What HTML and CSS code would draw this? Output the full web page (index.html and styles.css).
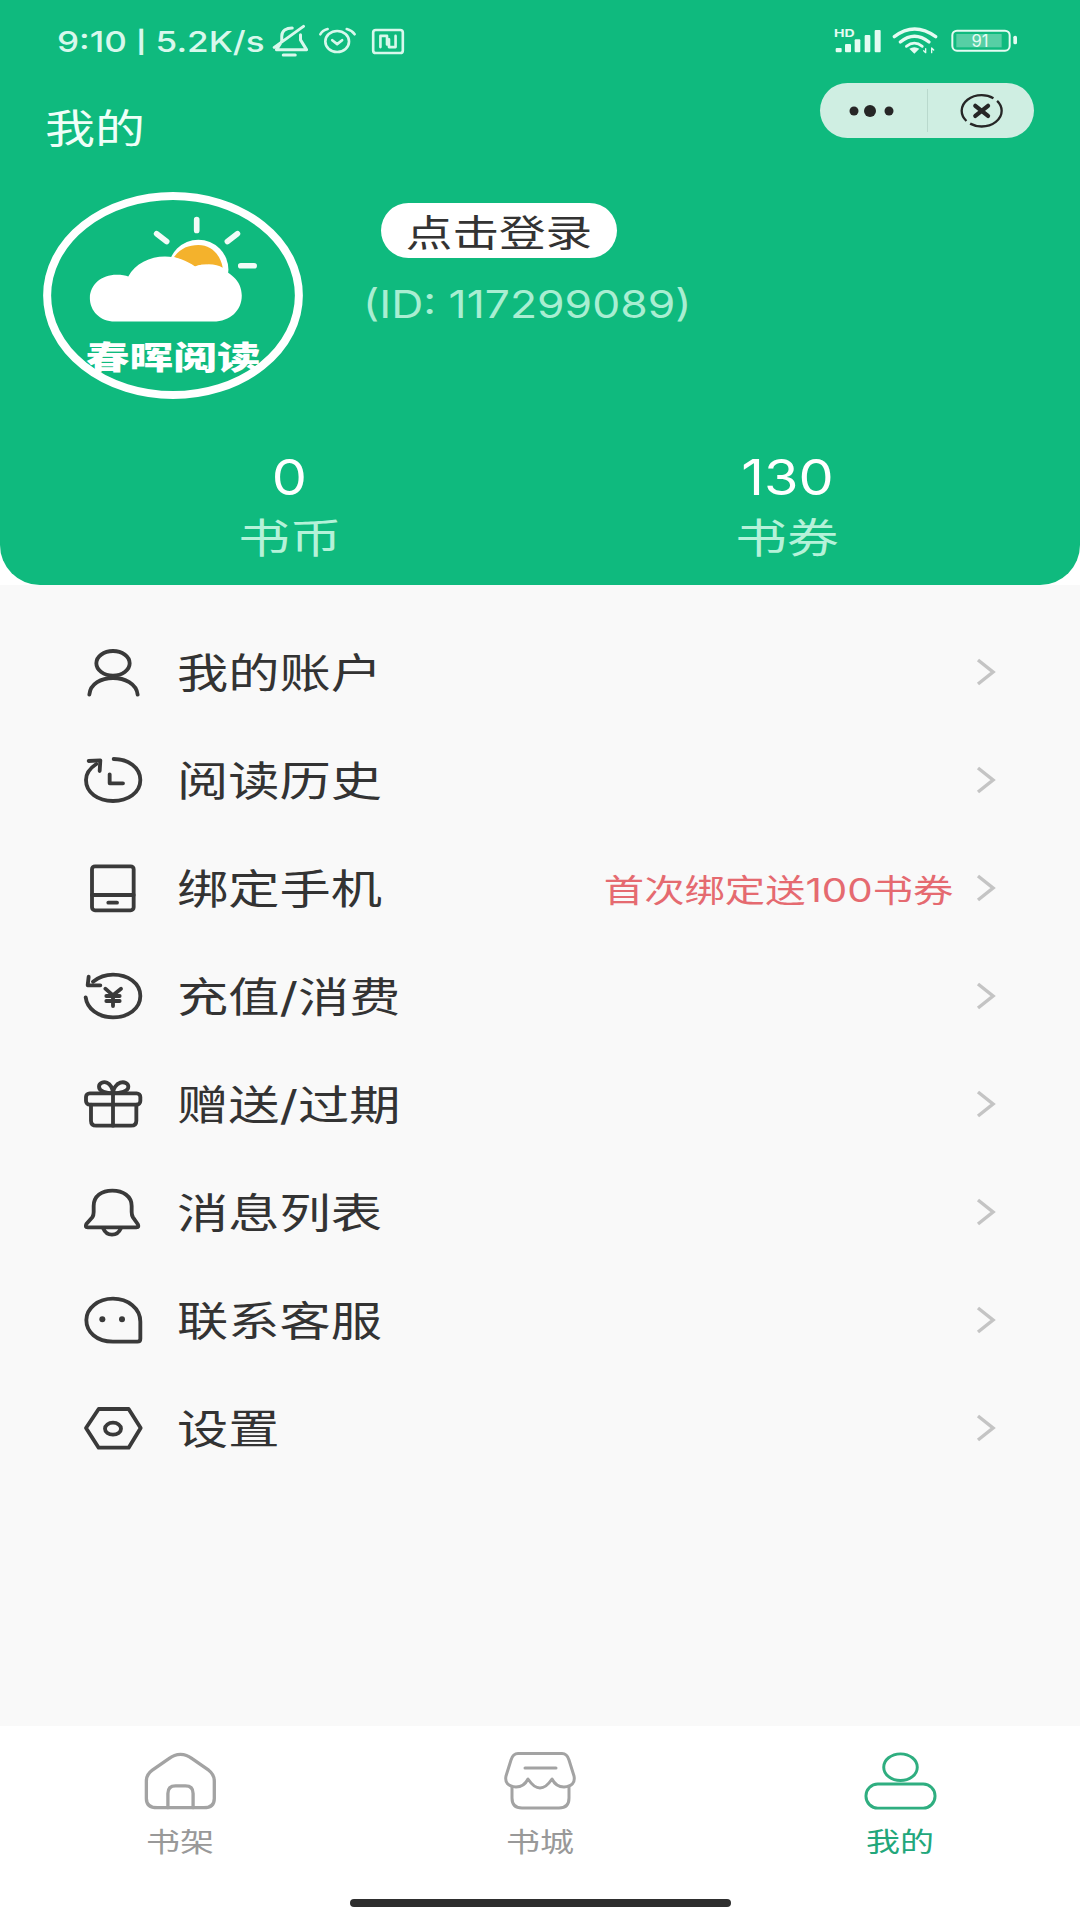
FILE: index.html
```html
<!DOCTYPE html>
<html>
<head>
	<meta charset="utf-8">
	<title>我的</title>
	<link rel="stylesheet" href="styles.css">
</head>
<body>
<div class="page">
	<!--顶部-->
	<div class="head">
		<div class="status">
			<div class="status-left">
				<span class="clock">9:10 <span class="sep">|</span> 5.2K/s</span>
				<svg class="st-bell" viewBox="30 18 96 90"><path d="M42 86 L56 64 V50 C56 36 68 28 84 28 M106 46 V60 L122 86 H42 M36 80 L114 24 M60 100 H92"/></svg>
				<svg class="st-alarm" viewBox="165 18 118 88"><ellipse cx="223" cy="62" rx="36" ry="32"/><path d="M172 40 Q178 28 194 24 M252 24 Q268 28 276 40 M208 58 L223 70 L238 58"/></svg>
				<svg class="st-nfc" viewBox="322 22 102 82"><rect x="328" y="28" width="90" height="70" rx="8"/><path d="M350 80 V46 H370 V72 M396 46 V80 H376 V56"/></svg>
			</div>
			<svg class="status-right" viewBox="0 0 600 126">
				<text class="st-hd" x="27" y="52" textLength="62" lengthAdjust="spacingAndGlyphs">HD</text>
				<g class="st-fill">
					<rect x="32" y="84" width="18" height="13" rx="3"/>
					<rect x="60" y="72" width="18" height="25" rx="3"/>
					<rect x="89" y="58" width="17" height="39" rx="3"/>
					<rect x="119" y="45" width="17" height="52" rx="3"/>
					<rect x="149" y="30" width="18" height="67" rx="3"/>
					<path d="M253 86 Q268 77 283 86 L268 101Z"/>
					<rect x="565" y="47" width="11" height="26" rx="5"/>
				</g>
				<g class="st-line">
					<path d="M208 50 Q268 4 332 50"/>
					<path d="M226 66 Q268 32 312 66"/>
					<path d="M244 79 Q268 60 292 79" stroke-width="8"/>
					<path d="M302 86 V98 M296 92 L302 98 M320 98 V84 M326 90 L320 84" stroke-width="4"/>
					<rect x="382" y="32" width="172" height="60" rx="14" stroke-width="6"/>
				</g>
				<rect class="st-level" x="394" y="42" width="136" height="40"/>
				<text class="st-num" x="465" y="81">91</text>
			</svg>
		</div>
		<div class="title-row">
			<div class="title"><span class="wide">我的</span></div>
			<div class="capsule">
				<div class="cap-cell">
					<svg class="cap-dots" viewBox="0 0 50 14"><circle cx="5" cy="7" r="4.5"/><circle cx="21" cy="7" r="6"/><circle cx="40" cy="7" r="4.5"/></svg>
				</div>
				<div class="cap-cell cap-close">
					<svg class="cap-x" viewBox="775 275 135 110"><ellipse cx="843" cy="331" rx="60" ry="47" pathLength="100" stroke-dasharray="46 4" stroke-dashoffset="-89.500"/><path class="cap-x-bold" d="M824 316 L862 346 M862 316 L824 346"/></svg>
				</div>
			</div>
		</div>
		<div class="profile">
			<svg class="avatar" viewBox="130 35 778 620">
				<path class="ray" d="M590 118 V150 M470 160 L500 183 M682 183 L712 160 M722 256 H762"/>
				<circle class="sun-ring" cx="595" cy="268" r="90"/>
				<path class="sun" d="M522 230 C540 205 565 194 595 194 C635 194 662 225 668 262 C650 250 615 248 585 259 C565 248 540 238 522 230Z"/>
				<path class="cloud" d="M345 423 C300 423 270 390 270 353 C270 312 305 283 350 283 C365 283 378 285 385 288 C405 250 450 228 495 228 C530 228 560 240 585 258 C600 250 625 252 640 258 C690 272 725 300 725 345 C725 390 690 423 640 423Z"/>
				<ellipse class="ring" cx="519" cy="345" rx="377" ry="298"/>
				<text class="logo-text" x="258" y="566" textLength="524" lengthAdjust="spacingAndGlyphs">春晖阅读</text>
			</svg>
			<div class="user">
				<div class="login"><span class="wide-c">点击登录</span></div>
				<div class="uid"><span class="wide-id">(ID: 117299089)</span></div>
			</div>
		</div>
		<div class="stats">
			<div class="stat">
				<div class="stat-num"><span class="wide-n">0</span></div>
				<div class="stat-name"><span class="wide-c">书币</span></div>
			</div>
			<div class="stat">
				<div class="stat-num"><span class="wide-n">130</span></div>
				<div class="stat-name"><span class="wide-c">书券</span></div>
			</div>
		</div>
	</div>

	<!--菜单-->
	<ul class="menu">
		<li class="row">
			<svg class="ico" viewBox="0 0 180 180"><ellipse cx="90" cy="64" rx="50" ry="37"/><path d="M19 158 C22 125 55 108 90 108 C125 108 160 125 164 158"/></svg>
			<span class="name"><span class="wide">我的账户</span></span>
			<svg class="arrow" viewBox="0 0 20 28"><path d="M2 2 L17 14 L2 26"/></svg>
		</li>
		<li class="row">
			<svg class="ico" viewBox="0 0 180 180"><path d="M92 27 C135 27 172 52 172 90 C172 128 135 153 90 153 C45 153 9 128 9 90 C9 70 20 55 40 42"/><path d="M17 33 L52 31 L50 63"/><path d="M80 73 V100 H120"/></svg>
			<span class="name"><span class="wide">阅读历史</span></span>
			<svg class="arrow" viewBox="0 0 20 28"><path d="M2 2 L17 14 L2 26"/></svg>
		</li>
		<li class="row">
			<svg class="ico" viewBox="0 0 180 180"><rect x="27" y="25" width="125" height="132" rx="9"/><path d="M27 111 H152"/><path d="M76 134 H102"/></svg>
			<span class="name"><span class="wide">绑定手机</span></span>
			<span class="note"><span class="wide-r">首次绑定送100书券</span></span>
			<svg class="arrow arrow-near" viewBox="0 0 20 28"><path d="M2 2 L17 14 L2 26"/></svg>
		</li>
		<li class="row">
			<svg class="ico" viewBox="0 0 180 180"><path d="M30 47 C48 33 68 26 90 26 C135 26 172 52 172 90 C172 128 135 154 90 154 C45 154 12 128 8 94"/><path d="M17 32 L14 58 L52 58"/><path d="M67 68 L90 88 L114 68 M70 90 H110 M70 105 H110 M90 88 V120"/></svg>
			<span class="name"><span class="wide">充值/消费</span></span>
			<svg class="arrow" viewBox="0 0 20 28"><path d="M2 2 L17 14 L2 26"/></svg>
		</li>
		<li class="row">
			<svg class="ico" viewBox="0 0 180 180"><rect x="9" y="58" width="163" height="34" rx="11"/><path d="M24 92 V140 Q24 155 40 155 H144 Q160 155 160 140 V92"/><path d="M90 58 V155"/><path d="M90 58 C70 58 48 52 48 38 C48 26 62 22 72 26 C82 30 90 44 90 58 C90 44 100 30 112 26 C124 22 136 28 136 38 C136 52 112 58 90 58"/></svg>
			<span class="name"><span class="wide">赠送/过期</span></span>
			<svg class="arrow" viewBox="0 0 20 28"><path d="M2 2 L17 14 L2 26"/></svg>
		</li>
		<li class="row">
			<svg class="ico" viewBox="0 0 180 180"><path d="M14 136 H160 Q170 136 164 126 L150 106 Q146 100 146 90 V72 C146 42 120 26 88 26 C56 26 32 42 32 72 V90 Q32 100 28 106 L10 126 Q5 136 14 136Z"/><path d="M60 138 C66 152 76 158 87 158 C98 158 108 152 114 138"/></svg>
			<span class="name"><span class="wide">消息列表</span></span>
			<svg class="arrow" viewBox="0 0 20 28"><path d="M2 2 L17 14 L2 26"/></svg>
		</li>
		<li class="row">
			<svg class="ico" viewBox="0 0 180 180"><path d="M163 155 H90 C40 155 10 125 10 90 C10 55 45 26 90 26 C135 26 172 55 172 95 V146 Q172 155 163 155Z"/><circle class="eye" cx="58" cy="88" r="9"/><circle class="eye" cx="117" cy="88" r="9"/></svg>
			<span class="name"><span class="wide">联系客服</span></span>
			<svg class="arrow" viewBox="0 0 20 28"><path d="M2 2 L17 14 L2 26"/></svg>
		</li>
		<li class="row">
			<svg class="ico" viewBox="0 0 180 180"><path d="M9 90 L47 33 H137 L173 90 L137 149 H47Z"/><ellipse cx="90" cy="92" rx="24" ry="18"/></svg>
			<span class="name"><span class="wide">设置</span></span>
			<svg class="arrow" viewBox="0 0 20 28"><path d="M2 2 L17 14 L2 26"/></svg>
		</li>
	</ul>

	<!--底部-->
	<div class="foot">
		<div class="tabs">
			<div class="tab">
				<svg class="tab-ico tab-home" viewBox="40 20 220 175"><path d="M150 27 C135 27 125 32 115 40 L65 75 Q47 88 47 108 V160 Q47 188 80 188 H220 Q252 188 252 160 V108 Q252 88 235 75 L185 40 C175 32 165 27 150 27Z"/><path d="M112 188 V145 Q112 122 135 122 H165 Q188 122 188 145 V188"/></svg>
				<div class="tab-name"><span class="wide-c">书架</span></div>
			</div>
			<div class="tab">
				<svg class="tab-ico" viewBox="0 0 73 58"><path d="M2 24 L7 8 Q9 1.5 14 1.5 H58 Q63 1.5 65 8 L70 24 Q72 34 60 35 Q52 35 48 27 Q42 36 36 36 Q30 36 24 27 Q20 35 12 35 Q0 34 2 24Z"/><path d="M8 35 V46 Q8 56 18 56 H55 Q65 56 65 46 V35"/><path d="M21 16 H52"/></svg>
				<div class="tab-name"><span class="wide-c">书城</span></div>
			</div>
			<div class="tab tab-on">
				<svg class="tab-ico" viewBox="0 0 74 58"><ellipse cx="37" cy="15" rx="17" ry="13.500"/><rect x="2" y="32" width="70" height="24.500" rx="12"/></svg>
				<div class="tab-name"><span class="wide-c">我的</span></div>
			</div>
		</div>
		<div class="home-bar"></div>
	</div>
</div>
</body>
</html>
```

FILE: styles.css
```css
*{
    margin: 0;
    padding: 0;
    list-style: none;
    box-sizing: border-box;
}

html, body{
    width: 1080px;
    height: 1920px;
    background-color: #fff;
    font-family: Inter, "Noto Sans CJK SC", sans-serif;
}

.page{
    width: 1080px;
    height: 1920px;
    display: flex;
    flex-direction: column;
    overflow: hidden;
}

/*字体被横向拉伸*/
.wide, .wide-c, .wide-r, .wide-id, .wide-n{
    display: inline-block;
    white-space: nowrap;
}
.wide{
    transform: scaleX(1.25);
    transform-origin: left center;
}
.wide-c{
    transform: scaleX(1.26);
    transform-origin: center center;
}
.wide-n{
    transform: scaleX(1.14);
    transform-origin: center center;
}
.wide-r{
    transform: scaleX(1.26);
    transform-origin: right center;
}
.wide-id{
    transform: scaleX(1.17);
    transform-origin: left center;
}

/*顶部*/
.head{
    height: 585px;
    flex: none;
    padding-top: 20px;
    background-color: #0fba7e;
    border-radius: 0 0 40px 40px;
}

.status{
    height: 42px;
    display: flex;
    justify-content: space-between;
    align-items: center;
    padding: 0 55px 0 57px;
}

.status-left{
    display: flex;
    align-items: center;
}
.clock{
    width: 217px;
    font-size: 29px;
    font-weight: 500;
    color: #d8f8ec;
    display: block;
    white-space: nowrap;
    transform: scaleX(1.21);
    transform-origin: left center;
}
.sep{
    font-size: 22px;
    font-weight: 700;
    vertical-align: 2px;
}
.st-bell, .st-alarm, .st-nfc{
    fill: none;
    stroke: #d8f8ec;
    stroke-width: 8;
    stroke-linecap: round;
    stroke-linejoin: round;
}
.st-bell{
    width: 36px;
    height: 34px;
    margin-left: -2px;
}
.st-alarm{
    width: 39px;
    height: 29px;
    margin-left: 10px;
}
.st-nfc{
    width: 34px;
    height: 27px;
    margin-left: 14px;
}
.status-right{
    width: 200px;
    height: 42px;
}
.st-hd{
    font-size: 32px;
    font-weight: 700;
    fill: #e4fbf2;
}
.st-fill{
    fill: #e4fbf2;
}
.st-line{
    fill: none;
    stroke: #e4fbf2;
    stroke-width: 10;
    stroke-linecap: round;
}
.st-level{
    fill: #fff;
    opacity: 0.3;
}
.st-num{
    font-size: 50px;
    fill: #e4fbf2;
    text-anchor: middle;
}

.title-row{
    margin-top: 21px;
    padding: 0 46px 0 45px;
    display: flex;
    justify-content: space-between;
    align-items: flex-start;
}
.title{
    margin-top: 25px;
    font-size: 40px;
    line-height: 42px;
    color: #effff8;
}

.capsule{
    width: 214px;
    height: 55px;
    border-radius: 28px;
    background-color: #cfeee2;
    display: flex;
}
.cap-cell{
    width: 107px;
    display: flex;
    align-items: center;
    justify-content: center;
}
.cap-close{
    border-left: 1px solid #b9d9cd;
    margin: 6px 0;
}
.cap-dots{
    width: 50px;
    height: 14px;
    fill: #262626;
}
.cap-x{
    width: 45px;
    height: 37px;
    fill: none;
    stroke: #262626;
    stroke-width: 7;
}
.cap-x-bold{
    stroke-width: 13;
    stroke-linecap: round;
}

.profile{
    margin-top: 42px;
    padding-left: 43px;
    display: flex;
    align-items: flex-start;
}
.avatar{
    width: 260px;
    height: 207px;
    flex: none;
}
.ring{
    fill: none;
    stroke: #fff;
    stroke-width: 24;
}
.ray{
    fill: none;
    stroke: #f2fbf7;
    stroke-width: 17;
    stroke-linecap: round;
}
.sun-ring{
    fill: #fff;
}
.sun{
    fill: #f4b22c;
}
.cloud{
    fill: #fff;
}
.logo-text{
    font-family: "Noto Sans CJK SC", sans-serif;
    font-size: 94px;
    font-weight: 900;
    fill: #fff;
}

.user{
    margin-left: 60px;
    padding-top: 11px;
}
.login{
    width: 236px;
    height: 55px;
    margin-left: 18px;
    border-radius: 28px;
    background-color: #fff;
    color: #333;
    font-size: 37px;
    display: flex;
    align-items: center;
    justify-content: center;
}
.uid{
    margin-top: 28px;
    font-size: 38px;
    line-height: 36px;
    color: #a9eed2;
}

.stats{
    margin-top: 59px;
    padding: 0 44px 0 41px;
    display: grid;
    grid-template-columns: 1fr 1fr;
}
.stat{
    text-align: center;
}
.stat-num{
    font-size: 49px;
    line-height: 40px;
    color: #fff;
}
.stat-name{
    margin-top: 20px;
    font-size: 41px;
    line-height: 40px;
    color: #b5f2d9;
}

/*菜单*/
.menu{
    flex: 1;
    background-color: #f9f9f9;
    padding-top: 33px;
}
.row{
    height: 108px;
    padding: 0 84px 0 83px;
    display: flex;
    align-items: center;
}
.ico{
    width: 60px;
    height: 60px;
    flex: none;
    fill: none;
    stroke: #3a3a3a;
    stroke-width: 11.500;
    stroke-linecap: round;
    stroke-linejoin: round;
}
.eye{
    fill: #3a3a3a;
    stroke: none;
}
.name{
    margin-left: 34px;
    margin-bottom: 4px;
    font-size: 41px;
    color: #333;
}
.note{
    margin-left: auto;
    font-size: 32px;
    color: #e56a70;
}
.arrow{
    width: 20px;
    height: 28px;
    margin-left: auto;
    fill: none;
    stroke: #c4c4c4;
    stroke-width: 3.500;
}
.arrow-near{
    margin-left: 23px;
}

/*底部*/
.foot{
    height: 194px;
    flex: none;
    background-color: #fff;
    padding-top: 26px;
}
.tabs{
    display: grid;
    grid-template-columns: repeat(3, 360px);
}
.tab{
    display: flex;
    flex-direction: column;
    align-items: center;
    color: #999;
}
.tab-ico{
    width: 73px;
    height: 58px;
    fill: none;
    stroke: #a3a3a3;
    stroke-width: 3;
    stroke-linecap: round;
    stroke-linejoin: round;
}
.tab-home{
    stroke-width: 10;
}
.tab-name{
    margin-top: 20px;
    font-size: 27px;
    line-height: 26px;
}
.tab-on{
    color: #22a77b;
}
.tab-on .tab-ico{
    stroke: #2fae80;
}
.home-bar{
    width: 381px;
    height: 8px;
    margin: 43px auto 0;
    border-radius: 4px;
    background-color: #2e2e2e;
}
```
